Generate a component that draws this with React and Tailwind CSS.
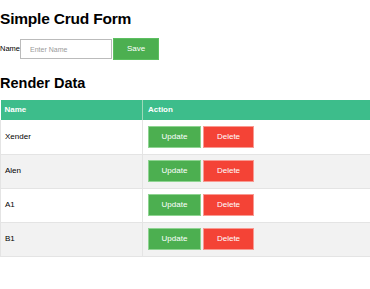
import React, { useState } from 'react';

const initialRows = ['Xender', 'Alen', 'A1', 'B1'];

export default function App() {
  const [name, setName] = useState('');
  const [rows] = useState(initialRows);

  return (
    <div className="w-[370px] h-[289px] bg-white text-black font-['Liberation_Sans',Arial,sans-serif]">
      <h1 className="pt-[9px] text-[15.5px] tracking-[-0.2px] font-bold leading-[20px]">Simple Crud Form</h1>

      <div className="mt-[9px] flex items-center">
        <label className="text-[7.5px]">Name</label>
        <input
          type="text"
          value={name}
          onChange={(e) => setName(e.target.value)}
          placeholder="Enter Name"
          className="w-[92px] h-[20px] border border-[#bbbbbb] px-[9px] text-[7px] placeholder-[#9a9a9a] outline-none"
        />
        <button className="ml-px w-[46px] h-[22px] bg-[#4caf50] text-white text-[8px] border border-[#5cbf60]">
          Save
        </button>
      </div>

      <h2 className="mt-[13px] text-[14.5px] font-bold leading-[20px]">Render Data</h2>

      <table className="mt-[7px] w-full border-collapse text-[8px]">
        <thead>
          <tr className="bg-[#3dbd8b] text-white h-[20px]">
            <th className="w-[142px] text-left font-bold pl-[4px] border-r border-[#9fd9b9]">Name</th>
            <th className="text-left font-bold pl-[5px]">Action</th>
          </tr>
        </thead>
        <tbody>
          {rows.map((r, i) => (
            <tr key={r} className={`h-[34px] border-b border-[#e4e4e4] ${i % 2 === 1 ? 'bg-[#f2f2f2]' : 'bg-white'}`}>
              <td className="pl-[4px] border-r border-[#e4e4e4] border-l">{r}</td>
              <td className="pl-[5px]">
                <div className="flex gap-[2px]">
                  <button className="w-[53px] h-[22px] bg-[#4caf50] text-white border border-[#8fd492]">Update</button>
                  <button className="w-[51px] h-[22px] bg-[#f44336] text-white border border-[#f89a92]">Delete</button>
                </div>
              </td>
            </tr>
          ))}
        </tbody>
      </table>
    </div>
  );
}
